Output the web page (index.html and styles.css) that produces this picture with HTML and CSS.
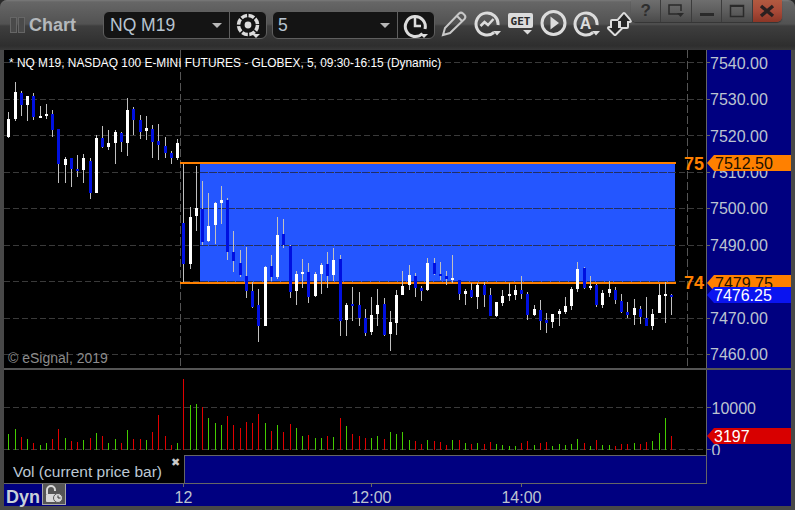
FILE: index.html
```html
<!DOCTYPE html>
<html lang="en">
<head>
<meta charset="utf-8">
<title>Chart</title>
<link rel="stylesheet" href="styles.css">
</head>
<body>
<div class="window">
  <header class="toolbar">
    <div class="title">
      <span class="grip"></span><span class="grip"></span>
      <span class="title-text">Chart</span>
    </div>
    <div class="group group-symbol">
      <div class="select select-symbol"><span class="select-text">NQ M19</span><span class="caret"></span></div>
      <button class="icon-btn">
        <svg width="30" height="28" viewBox="0 0 30 28"><circle cx="15" cy="14" r="9.5" class="ring ring-gear"/><circle cx="15" cy="14" r="3.4" class="solid"/><path d="M19 23h8l-4 4z" class="solid"/></svg>
      </button>
    </div>
    <div class="group group-interval">
      <div class="select select-interval"><span class="select-text">5</span><span class="caret"></span></div>
      <button class="icon-btn">
        <svg width="30" height="28" viewBox="0 0 30 28"><path d="M21.5 22.5A10 10 0 1 1 24 18" class="ring"/><path d="M14 7v8h6" class="hand"/><path d="M19 23h8l-4 4z" class="solid"/></svg>
      </button>
    </div>
    <div class="tools">
      <svg class="tool" viewBox="0 0 27 27"><path d="M2 25l2-7L18 3.500a3 3 0 0 1 4 0l1.500 1.500a3 3 0 0 1 0 4L9 23z" class="outline"/><path d="M16 6l5.500 5.500" class="outline"/></svg>
      <svg class="tool" viewBox="0 0 27 27"><path d="M20 22.500A11 11 0 1 1 24 15" class="ring"/><path d="M6.500 16l4-4 3.500 3 5.500-6" class="hand"/><path d="M19 21h8l-4 4.500z" class="solid"/></svg>
      <svg class="tool" viewBox="0 0 27 27"><rect x="1" y="3" width="25" height="15" rx="2" class="solid"/><text x="13.500" y="15" class="get-text">GET</text><path d="M16 20h9l-4.500 4.500z" class="solid"/></svg>
      <svg class="tool" viewBox="0 0 27 27"><circle cx="13.500" cy="13" r="11.500" class="ring"/><path d="M10.500 6.500l8.500 6.500-8.500 6.500z" class="solid"/></svg>
      <svg class="tool" viewBox="0 0 27 27"><path d="M20 22.500A11 11 0 1 1 24 15" class="ring"/><text x="12.500" y="18.500" class="a-text">A</text><path d="M19 21h8l-4 4.500z" class="solid"/></svg>
      <svg class="tool tool-last" viewBox="0 0 27 27"><path d="M18 4l6 7h-3v6h-6v-6h-3zM9 24l-6-6h3v-7h6v7h3z" class="arrow-halo"/><path d="M18 4l6 7h-3v6h-6v-6h-3zM9 24l-6-6h3v-7h6v7h3z" class="arrow-core"/></svg>
    </div>
    <div class="win-buttons">
      <div class="win-btn"><span class="win-q">?</span></div>
      <div class="win-btn"><svg width="20" height="16" viewBox="0 0 20 16"><path d="M13 11H3V2h12v6" class="win-line"/><path d="M11 10h7l-3.500 4z" class="win-fill"/></svg></div>
      <div class="win-btn"><svg width="20" height="16" viewBox="0 0 20 16"><rect x="3" y="10" width="14" height="3" class="win-fill"/></svg></div>
      <div class="win-btn"><svg width="20" height="16" viewBox="0 0 20 16"><rect x="3.500" y="2.500" width="13" height="11" class="win-line"/><rect x="3" y="2" width="14" height="2" class="win-fill"/></svg></div>
      <div class="win-btn win-close"><svg width="20" height="16" viewBox="0 0 20 16"><path d="M4 3l12 10M16 3L4 13" class="win-x"/></svg></div>
    </div>
  </header>

  <div class="body">
    <section class="row-main">
      <div class="plot">
        <svg id="price" class="svg-plot" width="702" height="318" viewBox="4 50 702 318">
          <rect x="200" y="164" width="475" height="118" class="zone"/>
          <g class="grid">
            <path d="M4 62.500H706M4 99.500H706M4 135.500H706M4 172.500H706M4 208.500H706M4 245.500H706M4 281.500H706M4 318.500H706M4 354.500H706"/>
          </g>
          <path d="M200 172.500H675M200 208.500H675M200 245.500H675M200 281.500H675" class="grid-zone"/>
          <g class="vgrid"><path d="M180.500 50V368M687.500 50V368"/></g>
          <path d="M180 163H676M180 283H676" class="level"/>
          <g id="candles"></g>
          <text x="684" y="170" class="level-text">75</text>
          <text x="684" y="289" class="level-text">74</text>
          <text x="9" y="66.500" class="study-title">* NQ M19, NASDAQ 100 E-MINI FUTURES - GLOBEX, 5, 09:30-16:15 (Dynamic)</text>
          <text x="8" y="363" class="copyright">© eSignal, 2019</text>
        </svg>
      </div>
      <svg class="svg-axis" width="85" height="318" viewBox="706 50 85 318">
        <path d="M706.500 50V368" class="axis-line"/>
        <path d="M706 62.500h4M706 99.500h4M706 135.500h4M706 172.500h4M706 208.500h4M706 245.500h4M706 318.500h4M706 354.500h4" class="axis-line"/>
        <g class="axis-text">
          <text x="710" y="69">7540.00</text>
          <text x="710" y="105">7530.00</text>
          <text x="710" y="142">7520.00</text>
          <text x="710" y="178">7510.00</text>
          <text x="710" y="214">7500.00</text>
          <text x="710" y="251">7490.00</text>
          <text x="710" y="324">7470.00</text>
          <text x="710" y="360">7460.00</text>
        </g>
        <path d="M707 163l7-8h77v16h-77z" class="tag-orange"/>
        <text x="715" y="169" class="tag-dark">7512.50</text>
        <path d="M707 283l7-8h77v16h-77z" class="tag-orange"/>
        <text x="715" y="289" class="tag-dark">7479.75</text>
        <path d="M707 295l7-8h77v16h-77z" class="tag-blue"/>
        <text x="714" y="301" class="tag-light">7476.25</text>
      </svg>
    </section>
    <div class="divider"></div>
    <section class="row-vol">
      <svg id="volume" class="svg-plot" width="702" height="85" viewBox="4 370 702 85">
        <path d="M4 407.500H706M4 449.500H706" class="grid"/>
        <g id="bars"></g>
      </svg>
      <svg class="svg-axis" width="85" height="85" viewBox="706 370 85 85">
        <path d="M706.500 370V455M706 407.500h5M706 449.500h5" class="axis-line"/>
        <g class="axis-text">
          <text x="711.500" y="414">10000</text>
          <text x="711.500" y="456">0</text>
        </g>
        <path d="M707 436l7-8h77v16h-77z" class="tag-red"/>
        <text x="714" y="442" class="tag-light">3197</text>
      </svg>
      <div class="legend">
        <span class="legend-label">Vol (current price bar)</span>
        <span class="legend-close">✖</span>
      </div>
      <div class="axis-fill"></div>
    </section>
    <footer class="row-time">
      <span class="dyn">Dyn</span>
      <button class="lock">
        <svg width="22" height="20" viewBox="0 0 22 20"><path d="M4 10V6a4 4 0 0 1 8 0v1" class="lock-line"/><rect x="3" y="10" width="13" height="8" rx="1" class="lock-fill"/><circle cx="15" cy="14" r="4.500" class="lock-clock"/><path d="M15 11.500V14h2.500" class="lock-hand"/></svg>
      </button>
      <svg class="svg-time" width="702" height="22" viewBox="4 483 702 22">
        <path d="M183.500 483v4M371.500 483v4M521.500 483v4" class="axis-line"/>
        <g class="time-text">
          <text x="183.500" y="503">12</text>
          <text x="371.500" y="503">12:00</text>
          <text x="521.500" y="503">14:00</text>
        </g>
      </svg>
    </footer>
  </div>
</div>
<script src="chart.js"></script>
</body>
</html>
```
FILE: styles.css
```css
* { box-sizing: border-box; }
html, body { margin: 0; padding: 0; }
body { width: 795px; height: 510px; overflow: hidden; background: #2a2a2a; font-family: "Liberation Sans", Arial, sans-serif; }
svg { display: block; }
button { border: 0; padding: 0; margin: 0; background: none; }

.window { position: relative; width: 795px; height: 510px; background: #484848; border-radius: 7px 7px 0 0; overflow: hidden; }

/* toolbar */
.toolbar { position: relative; display: flex; height: 50px; padding: 11px 0 0 10px; background: linear-gradient(#7a7a7a 0, #666 2px, #525252 24px, #3e3e3e 26px, #2e2e2e 46px, #383838 50px); }
.title { display: flex; align-items: center; width: 93px; height: 28px; }
.grip { width: 7px; height: 16px; margin-right: 1px; border: 1px solid #666; background: #4a4a4a; }
.title-text { margin-left: 3px; font-size: 18px; font-weight: bold; color: #b4b8bc; }
.group { display: flex; height: 28px; border: 1px solid #5f5f5f; border-radius: 6px; background: #141414; }
.group-symbol { width: 164px; }
.group-interval { width: 163px; margin-left: 5px; }
.select { display: flex; align-items: center; justify-content: space-between; height: 100%; padding: 0 7px 0 6px; border-right: 1px solid #5f5f5f; }
.select-symbol { width: 127px; }
.select-interval { width: 126px; padding-left: 5px; }
.select-text { font-size: 17.5px; color: #b8c4d0; }
.caret { width: 0; height: 0; border-style: solid; border-width: 5px 5px 0; border-color: #b8b8b8 transparent transparent; }
.icon-btn { width: 36px; height: 100%; display: flex; align-items: center; justify-content: center; }
.ring { fill: none; stroke: #dcdcdc; stroke-width: 3; }
.ring-gear { stroke-width: 3.5; stroke-dasharray: 6 1.500; }
.solid { fill: #dcdcdc; }
.hand { fill: none; stroke: #dcdcdc; stroke-width: 2.500; }
.outline { fill: none; stroke: #c8c8c8; stroke-width: 2; }
.tools { display: flex; gap: 6px; margin-left: 6px; margin-top: -1px; height: 28px; }
.tool { width: 27px; height: 27px; }
.get-text { font-family: "DejaVu Sans Mono", monospace; font-size: 11px; font-weight: bold; fill: #2a2a2a; text-anchor: middle; }
.a-text { font-family: "Liberation Sans", sans-serif; font-size: 16px; font-weight: bold; fill: #dcdcdc; text-anchor: middle; }
.arrow-halo { fill: #dcdcdc; stroke: #dcdcdc; stroke-width: 4; stroke-linejoin: round; }
.arrow-core { fill: #262626; }

.win-buttons { position: absolute; top: 0; left: 631px; display: flex; width: 151px; height: 22px; border-radius: 0 0 5px 5px; overflow: hidden; box-shadow: 0 1px 1px #333; }
.win-btn { flex: 1; display: flex; align-items: center; justify-content: center; background: linear-gradient(#6e6e6e, #5e5e5e 50%, #4a4a4a); border-right: 1px solid #3c3c3c; }
.win-close { background: linear-gradient(#b25a40, #a84a38 50%, #8c3626); border-right: 0; }
.win-q { font-size: 17px; font-weight: bold; color: #2e2e2e; }
.win-line { fill: none; stroke: #2a2a2a; stroke-width: 1.500; }
.win-fill { fill: #2a2a2a; }
.win-x { fill: none; stroke: #2a2020; stroke-width: 3.500; }

/* panes */
.body { padding: 0 4px; }
.row-main { display: flex; height: 318px; }
.plot { width: 702px; height: 318px; }
.svg-plot { background: #000; }
.svg-axis { background: #000080; }
.divider { height: 2px; background: #555; }
.row-vol { display: grid; grid-template-columns: 702px 85px; grid-template-rows: 85px 28px; }

.zone { fill: #2456ff; }
.grid, .grid path { fill: none; stroke: #3a3a3a; stroke-width: 1; stroke-dasharray: 6 3; }
.grid-zone { fill: none; stroke: #1c2c70; stroke-width: 1; stroke-dasharray: 6 3; }
.vgrid path { fill: none; stroke: #555; stroke-width: 1; stroke-dasharray: 8 3; }
.level { fill: none; stroke: #ff8000; stroke-width: 2; }
.level-text { font-size: 18px; font-weight: bold; fill: #ff8000; }
.study-title { font-size: 11.900px; fill: #fff; }
.copyright { font-size: 14px; fill: #8c8c8c; }
.axis-line { fill: none; stroke: #666; stroke-width: 1; }
.axis-text text { font-size: 16px; fill: #bcc4d0; }
.tag-orange { fill: #ff8000; }
.tag-blue { fill: #0a14f0; }
.tag-red { fill: #d80000; }
.tag-dark { font-size: 16px; fill: #201000; }
.tag-light { font-size: 16px; fill: #fff; }

.legend { position: relative; display: flex; border-top: 1px solid #666; background: #000080; }
.legend-label { display: flex; align-items: center; height: 27px; margin-top: -1px; padding: 3px 0 0 9px; background: #000; border-right: 1px solid #666; font-size: 15.500px; color: #bcc8d4; box-sizing: content-box; width: 171px; }
.legend-close { position: absolute; left: 167px; top: -1px; font-size: 11px; line-height: 14px; color: #c8c8c8; }
.axis-fill { background: #000080; border-left: 1px solid #666; }

.row-time { position: relative; display: flex; align-items: stretch; width: 787px; height: 22.500px; background: #000080; }
.row-time::before { content: ""; position: absolute; left: 0; top: 0; width: 703px; height: 1px; background: #666; }
.dyn { width: 38px; padding: 4px 0 0 2px; font-size: 18px; font-weight: bold; color: #c8d0d8; line-height: 20px; }
.lock { display: flex; align-items: center; justify-content: center; width: 24px; height: 22px; border: 1px solid #a8a8a8; background: #555; }
.lock-line { fill: none; stroke: #d8d8d8; stroke-width: 2; }
.lock-fill { fill: #d8d8d8; }
.lock-clock { fill: #d8d8d8; stroke: #555; stroke-width: 1; }
.lock-hand { fill: none; stroke: #333; stroke-width: 1; }
.svg-time { position: absolute; left: 0; top: 0; }
.time-text text { font-size: 16px; fill: #bcc4d0; text-anchor: middle; }
```
FILE: chart.js
```js
(function () {
  var NS = 'http://www.w3.org/2000/svg';
  function rect(parent, x, y, w, h, fill) {
    var r = document.createElementNS(NS, 'rect');
    r.setAttribute('x', x); r.setAttribute('y', y);
    r.setAttribute('width', w); r.setAttribute('height', Math.max(h, 1));
    r.setAttribute('fill', fill);
    parent.appendChild(r);
  }
  var W = '#ffffff', B = '#0010e0';
  // [x, wickTop, wickBottom, bodyTop, bodyBottom, colour] in 3x reference units
  var groups = [
    { ox: 0, oy: 70, c: [
      [25,126,204,147,201,W],[46,36,153,66,147,W],[64,63,138,69,105,B],[82,78,153,78,105,W],[100,69,150,78,141,B],
      [121,108,144,138,144,W],[139,102,147,132,138,W],[157,120,201,132,180,B],[175,177,339,177,282,B],[196,261,339,267,285,W],
      [214,264,351,264,297,B],[232,255,321,297,303,B],[250,252,339,264,300,W],[271,264,387,273,369,B],[289,195,369,204,369,W],
      [307,168,234,204,231,B],[325,180,240,219,231,W],[346,180,282,186,219,W],[364,186,246,189,216,B],[382,84,258,120,219,W],
      [400,111,195,117,150,B],[421,135,207,150,186,B],[439,138,210,174,183,W],[457,165,264,177,216,B],[475,162,270,213,225,B],
      [496,201,264,228,249,B],[514,243,282,249,264,B],[532,207,270,219,264,W]
    ]},
    { ox: 170, oy: 150, c: [
      [40,42,396,219,342,B],[61,171,357,201,342,W],[79,48,243,174,198,W],[97,93,285,177,276,B],[115,129,276,228,273,W],
      [136,156,282,159,225,W],[154,108,222,150,159,W],[172,144,330,150,306,B],[190,243,366,306,333,B],[211,300,381,339,375,B],
      [229,291,444,378,423,B],[247,396,474,423,471,B],[265,417,576,465,528,B],[286,348,528,351,528,W],[304,315,393,348,381,B],
      [322,201,387,255,381,W],[340,207,294,252,285,B],[361,285,444,288,426,B],[379,363,465,372,423,W],[397,327,414,366,372,W],
      [415,339,459,366,441,B],[436,366,441,372,438,W],[454,339,432,345,372,W],[472,306,414,342,378,B],[490,294,393,330,375,W],
      [511,315,558,327,513,B],[529,459,558,465,510,W],[547,411,513,462,468,B],[568,426,528,465,504,B],[586,477,558,504,549,B],
      [604,441,555,495,546,W],[622,417,528,465,492,W],[643,444,558,462,555,B],[661,483,603,516,552,W],[679,420,555,435,519,W],
      [697,363,435,408,435,W],[718,345,420,375,405,W],[736,369,441,378,414,B],[754,408,453,414,423,B],[772,324,423,339,420,W]
    ]},
    { ox: 420, oy: 240, c: [
      [43,54,105,69,102,B],[61,66,120,102,108,B],[79,93,135,108,117,B],[97,45,129,114,120,W],[118,120,180,120,162,B],
      [136,147,195,153,162,W],[154,129,174,150,171,B],[172,129,207,135,171,W],[193,126,201,135,165,B],[211,144,228,165,228,B],
      [229,186,231,186,228,W],[247,150,198,168,189,W],[268,129,183,162,168,W],[286,135,180,150,165,W],[304,108,177,150,162,B],
      [322,156,240,162,225,B],[343,195,228,207,225,W],[361,180,270,210,243,B],[379,219,279,240,249,B],[397,222,264,222,246,W],
      [418,207,258,213,222,W],[436,171,222,198,216,W],[454,141,210,147,198,W],[472,66,156,87,147,W],[493,81,147,84,144,B],
      [511,108,150,138,144,W],[529,132,201,135,195,B],[547,150,204,159,195,W],[568,123,171,147,159,W],[586,141,192,150,180,B],
      [604,162,219,183,216,B],[622,186,234,216,225,B],[643,177,255,204,225,W],[661,198,252,207,231,B],[679,171,258,234,258,B],
      [697,207,270,222,258,W],[718,132,219,165,219,W],[736,126,249,162,168,W],[754,162,225,165,171,B]
    ]}
  ];
  var cg = document.getElementById('candles');
  groups.forEach(function (g) {
    g.c.forEach(function (k) {
      var x = g.ox + Math.floor(k[0] / 3);
      var wt = g.oy + Math.round(k[1] / 3), wb = g.oy + Math.round(k[2] / 3);
      var bt = g.oy + Math.round(k[3] / 3), bb = g.oy + Math.round(k[4] / 3);
      rect(cg, x, wt, 1, wb - wt, '#c0c0c0');
      rect(cg, x - 1, bt, 3, bb - bt, k[5]);
    });
  });

  var G = '#44cc00', R = '#e00000';
  var vols = [
    { ox: 0, v: [[25,192,G],[46,177,G],[64,201,R],[82,207,G],[100,219,R],[121,225,G],[139,219,G],[157,207,R],[175,177,R],[196,204,G],
      [214,213,R],[232,216,R],[250,210,G],[271,204,R],[289,189,G],[307,198,R],[325,219,G],[346,207,G],[364,219,R],[382,180,G],
      [400,207,R],[421,207,R],[439,210,G],[457,186,R],[475,135,R],[496,198,R],[514,225,R],[532,219,G],[550,27,R],[571,105,G],
      [589,102,G],[607,111,R],[625,144,G],[646,159,G],[664,165,G],[682,138,R],[700,165,R],[721,174,R],[739,156,R],[757,159,R],
      [775,132,R],[796,159,G],[814,183,R],[832,165,G],[850,186,R],[871,162,R],[889,174,G],[907,198,G],[925,195,R],[946,204,G],
      [964,204,G],[982,198,R],[1000,201,G],[1021,144,R],[1039,168,G]] },
    { ox: 350, v: [[7,192,R],[28,198,R],[46,204,R],[64,204,G],[82,198,G],[103,207,R],[121,186,G],[139,192,G],[157,186,G],[178,210,G],
      [196,213,R],[214,222,R],[232,210,G],[253,213,R],[271,216,R],[289,225,R],[307,210,G],[328,210,R],[346,219,G],[364,222,R],
      [382,219,G],[403,222,R],[421,216,R],[439,222,G],[457,225,G],[478,228,G],[496,228,G],[514,219,R],[532,213,R],[553,225,G],
      [571,219,R],[589,216,R],[607,228,G],[628,222,G],[646,225,G],[664,222,G],[682,207,G],[703,219,R],[721,228,G],[739,210,R],
      [757,225,G],[778,225,G],[796,228,R],[814,222,R],[832,222,R],[853,219,G],[871,222,R],[889,216,R],[907,213,G],[928,189,G],
      [946,144,G],[964,198,R]] }
  ];
  var bg = document.getElementById('bars');
  vols.forEach(function (g) {
    g.v.forEach(function (b) {
      var top = 370 + Math.round(b[1] / 3);
      rect(bg, g.ox + Math.floor(b[0] / 3), top, 1, 450 - top, b[2]);
    });
  });
})();
```
